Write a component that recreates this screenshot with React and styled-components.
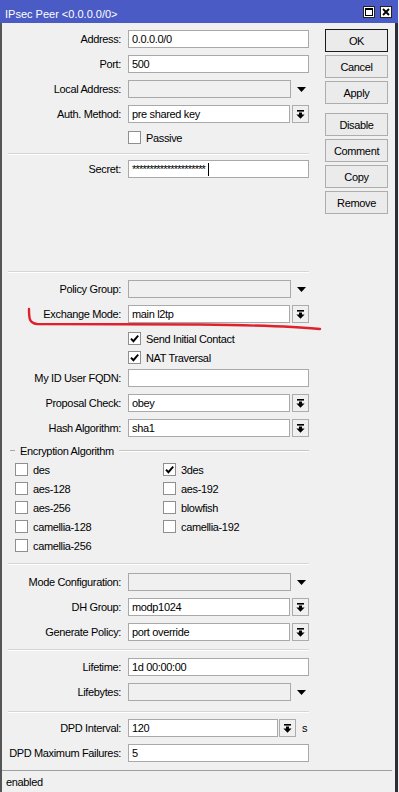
import styled, { createGlobalStyle } from "styled-components";

const GlobalStyle = createGlobalStyle`
  html, body {
    margin: 0;
    padding: 0;
    background: #f0f0f0;
  }
  body {
    font-family: "Liberation Sans", Arial, sans-serif;
    font-size: 11px;
    color: #000;
    letter-spacing: -0.35px;
  }
`;

function DropIcon() {
  return (
    <svg width="9" height="9" viewBox="0 0 9 9">
      <rect x="1" y="0" width="7" height="1.6" fill="#000" />
      <polygon points="3,2.6 6,2.6 6,4.6 8.6,4.6 4.5,8.8 0.4,4.6 3,4.6" fill="#000" />
    </svg>
  );
}

function Triangle() {
  return (
    <svg width="9" height="5" viewBox="0 0 9 5">
      <polygon points="0,0 9,0 4.5,5" fill="#000" />
    </svg>
  );
}

function Tick() {
  return (
    <svg width="11" height="11" viewBox="0 0 11 11">
      <path d="M2 5.6 L4.4 8.2 L9.2 2.6" stroke="#000" strokeWidth="1.9" fill="none" />
    </svg>
  );
}

function Field({ label, value, kind = "text", mt = 7 }) {
  return (
    <Row $mt={mt}>
      <Label>{label}</Label>
      <Control>
        {kind === "text" && <Input $w={181}>{value}</Input>}
        {kind === "secret" && (
          <Input $w={181}>
            <Stars>*********************</Stars>
            <Caret />
          </Input>
        )}
        {kind === "select" && (
          <>
            <Input $w={162}>{value}</Input>
            <DropBtn><DropIcon /></DropBtn>
          </>
        )}
        {kind === "combo" && (
          <>
            <Input $w={163} $off>{value}</Input>
            <Arrow><Triangle /></Arrow>
          </>
        )}
      </Control>
    </Row>
  );
}

function Check({ label, checked, mt }) {
  return (
    <CheckRow $mt={mt}>
      <Box>{checked && <Tick />}</Box>
      <span>{label}</span>
    </CheckRow>
  );
}

const ciphers = [
  ["des", false], ["3des", true],
  ["aes-128", false], ["aes-192", false],
  ["aes-256", false], ["blowfish", false],
  ["camellia-128", false], ["camellia-192", false],
  ["camellia-256", false],
];

export default function App() {
  return (
    <>
      <GlobalStyle />
      <Window>
        <TitleBar>
          <Title>IPsec Peer &lt;0.0.0.0/0&gt;</Title>
          <TitleButtons>
            <svg width="12" height="12" viewBox="0 0 12 12">
              <rect x="0.5" y="0.5" width="11" height="11" fill="#fff" stroke="#222" />
              <rect x="2.5" y="2.5" width="7" height="7" fill="#fff" stroke="#000" />
              <rect x="2" y="2" width="8" height="2" fill="#000" />
            </svg>
            <svg width="12" height="12" viewBox="0 0 12 12">
              <rect x="0.5" y="0.5" width="11" height="11" fill="#fff" stroke="#222" />
              <path d="M3 3 L9 9 M9 3 L3 9" stroke="#000" strokeWidth="1.9" />
            </svg>
          </TitleButtons>
        </TitleBar>

        <Frame>
          <Body>
            <Form>
              <Field label="Address:" value="0.0.0.0/0" mt={0} />
              <Field label="Port:" value="500" />
              <Field label="Local Address:" kind="combo" />
              <Field label="Auth. Method:" value="pre shared key" kind="select" />
              <Check label="Passive" mt={8} />
              <Separator $mt={9} />
              <Field label="Secret:" kind="secret" mt={6} />

              <Separator $mt={93} />
              <Field label="Policy Group:" kind="combo" mt={8} />
              <Field label="Exchange Mode:" value="main l2tp" kind="select" />
              <Check label="Send Initial Contact" checked mt={9} />
              <Check label="NAT Traversal" checked mt={6} />
              <Field label="My ID User FQDN:" mt={5} />
              <Field label="Proposal Check:" value="obey" kind="select" />
              <Field label="Hash Algorithm:" value="sha1" kind="select" />

              <Legend>
                <LegendDash />
                <LegendText>Encryption Algorithm</LegendText>
                <LegendLine />
              </Legend>
              <CipherGrid>
                {ciphers.map(([name, on]) => (
                  <Cipher key={name}>
                    <Box>{on && <Tick />}</Box>
                    <span>{name}</span>
                  </Cipher>
                ))}
              </CipherGrid>

              <Separator $mt={11} />
              <Field label="Mode Configuration:" kind="combo" mt={9} />
              <Field label="DH Group:" value="modp1024" kind="select" />
              <Field label="Generate Policy:" value="port override" kind="select" />

              <Separator $mt={8} />
              <Field label="Lifetime:" value="1d 00:00:00" mt={8} />
              <Field label="Lifebytes:" kind="combo" />

              <Separator $mt={10} />
              <Row $mt={7}>
                <Label>DPD Interval:</Label>
                <Control>
                  <Input $w={150}>120</Input>
                  <DropBtn $gap={1}><DropIcon /></DropBtn>
                  <Unit>s</Unit>
                </Control>
              </Row>
              <Field label="DPD Maximum Failures:" value="5" />
            </Form>

            <ButtonCol>
              <Btn $default>OK</Btn>
              <Btn>Cancel</Btn>
              <Btn>Apply</Btn>
              <Btn $mt={9}>Disable</Btn>
              <Btn>Comment</Btn>
              <Btn>Copy</Btn>
              <Btn>Remove</Btn>
            </ButtonCol>
          </Body>
          <StatusBar>enabled</StatusBar>
        </Frame>

        <Annotation width="399" height="792" viewBox="0 0 399 792">
          <path
            d="M29 309 C29 318 29 323 37 324 L200 324.5 Q285 325.5 320 329"
            stroke="#e0202c"
            strokeWidth="2.4"
            fill="none"
            strokeLinecap="round"
          />
        </Annotation>
      </Window>
    </>
  );
}

const Window = styled.div`
  position: relative;
  width: 398px;
  height: 792px;
  display: flex;
  flex-direction: column;
  overflow: hidden;
  background: #f0f0f0;
`;

const TitleBar = styled.div`
  height: 23px;
  flex: none;
  background: #4b5bc6;
  display: flex;
  align-items: center;
  justify-content: space-between;
  padding: 0 6px 0 5px;
`;

const Title = styled.span`
  color: #fff;
  font-size: 11px;
  letter-spacing: 0;
  padding-top: 4px;
`;

const TitleButtons = styled.div`
  display: flex;
  gap: 5px;
  padding-top: 1px;
`;

const Frame = styled.div`
  flex: 1;
  display: flex;
  flex-direction: column;
  border-left: 2px solid #555;
  border-right: 3px solid #2d2d3a;
`;

const Body = styled.div`
  flex: 1;
  display: flex;
  padding: 7px 0 0 6px;
`;

const Form = styled.div`
  width: 301px;
  display: flex;
  flex-direction: column;
`;

const Row = styled.div`
  display: grid;
  grid-template-columns: 113px 181px;
  column-gap: 7px;
  height: 18px;
  margin-top: ${(p) => p.$mt}px;
  align-items: center;
`;

const Label = styled.span`
  text-align: right;
  white-space: nowrap;
  line-height: 18px;
`;

const Control = styled.div`
  display: flex;
  align-items: center;
  height: 18px;
`;

const Input = styled.div`
  box-sizing: border-box;
  width: ${(p) => p.$w}px;
  height: 18px;
  border: 1px solid #a9a9a9;
  background: ${(p) => (p.$off ? "#f0f0f0" : "#fff")};
  padding: 0 3px;
  line-height: 16px;
  white-space: nowrap;
  overflow: hidden;
  display: flex;
  align-items: center;
`;

const Stars = styled.span`
  letter-spacing: -0.8px;
  line-height: 16px;
`;

const Caret = styled.span`
  display: inline-block;
  width: 1px;
  height: 13px;
  margin-left: 3px;
  background: #000;
`;

const DropBtn = styled.div`
  box-sizing: border-box;
  width: 17px;
  height: 18px;
  margin-left: ${(p) => p.$gap ?? 2}px;
  border: 1px solid #acacac;
  background: #f0f0f0;
  display: flex;
  align-items: center;
  justify-content: center;
`;

const Arrow = styled.div`
  margin-left: 6px;
  display: flex;
  align-items: center;
`;

const Unit = styled.span`
  margin-left: 6px;
`;

const CheckRow = styled.div`
  display: flex;
  align-items: center;
  gap: 5px;
  height: 13px;
  margin-left: 120px;
  margin-top: ${(p) => p.$mt}px;
`;

const Box = styled.div`
  box-sizing: border-box;
  width: 13px;
  height: 13px;
  border: 1px solid #8e8f8f;
  background: #fff;
  display: flex;
  align-items: center;
  justify-content: center;
  flex: none;
`;

const Separator = styled.div`
  height: 1px;
  background: #d6d6d6;
  box-shadow: 0 1px 0 #fff;
  margin-top: ${(p) => p.$mt}px;
`;

const Legend = styled.div`
  display: flex;
  align-items: center;
  height: 13px;
  margin-top: 7px;
`;

const LegendDash = styled.div`
  width: 5px;
  height: 1px;
  margin-left: 2px;
  background: #a8a8a8;
`;

const LegendText = styled.span`
  padding: 0 5px 0 5px;
  white-space: nowrap;
`;

const LegendLine = styled.div`
  flex: 1;
  height: 1px;
  background: #c4c4c4;
  box-shadow: 0 1px 0 #fff;
`;

const CipherGrid = styled.div`
  display: grid;
  grid-template-columns: 148px 1fr;
  row-gap: 6px;
  margin-top: 6px;
  padding-left: 7px;
`;

const Cipher = styled.div`
  display: flex;
  align-items: center;
  gap: 5px;
  height: 13px;
`;

const ButtonCol = styled.div`
  width: 63px;
  margin-left: 16px;
  margin-top: -1px;
  display: flex;
  flex-direction: column;
`;

const Btn = styled.div`
  box-sizing: border-box;
  height: 23px;
  margin-top: ${(p) => p.$mt ?? 3}px;
  border: 1px solid ${(p) => (p.$default ? "#1a1a1a" : "#adadad")};
  background: #ebebeb;
  display: flex;
  align-items: center;
  justify-content: center;
  &:first-child {
    margin-top: 0;
  }
`;

const StatusBar = styled.div`
  height: 22px;
  flex: none;
  box-sizing: border-box;
  border-top: 1px solid #a0a0a0;
  margin-right: 3px;
  padding-left: 4px;
  display: flex;
  align-items: center;
`;

const Annotation = styled.svg`
  position: absolute;
  top: 0;
  left: 0;
  pointer-events: none;
`;
